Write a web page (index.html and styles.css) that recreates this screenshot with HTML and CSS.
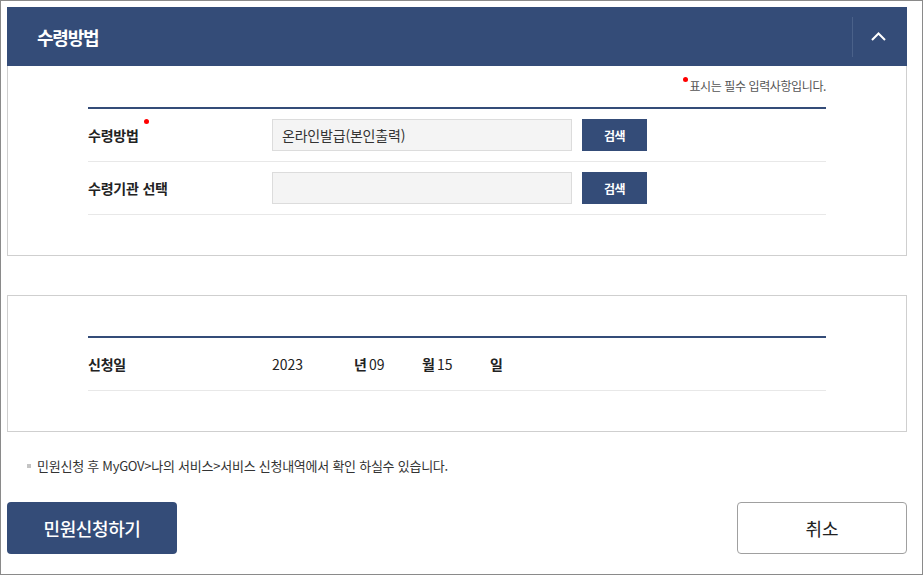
FILE: index.html
```html
<!DOCTYPE html>
<html lang="ko">
<head>
<meta charset="utf-8">
<title>수령방법</title>
<link rel="stylesheet" href="styles.css">
</head>
<body>
<div class="frame">
  <div class="sec-head">
    <h2 class="sec-title">수령방법</h2>
    <div class="toggle">
      <svg width="15" height="9" viewBox="0 0 15 9"><polyline points="1,8 7.5,1.5 14,8" fill="none" stroke="#fff" stroke-width="2"/></svg>
    </div>
  </div>
  <div class="panel panel-first">
    <p class="req-note"><span class="dot"></span>표시는 필수 입력사항입니다.</p>
    <div class="tbl">
      <div class="row">
        <div class="label">수령방법<span class="dot dot-label"></span></div>
        <div class="value">
          <div class="inp">온라인발급(본인출력)</div>
          <button class="btn-search">검색</button>
        </div>
      </div>
      <div class="row">
        <div class="label">수령기관 선택</div>
        <div class="value">
          <div class="inp"></div>
          <button class="btn-search">검색</button>
        </div>
      </div>
    </div>
  </div>
  <div class="panel panel-second">
    <div class="tbl">
      <div class="row">
        <div class="label">신청일</div>
        <div class="value date">
          <span class="d-year">2023</span>
          <span class="d-part"><b>년</b><span class="num">09</span></span>
          <span class="d-part"><b>월</b><span class="num">15</span></span>
          <span class="d-day"><b>일</b></span>
        </div>
      </div>
    </div>
  </div>
  <p class="info"><span class="sq"></span>민원신청 후 MyGOV&gt;나의 서비스&gt;서비스 신청내역에서 확인 하실수 있습니다.</p>
  <div class="actions">
    <button class="btn-primary">민원신청하기</button>
    <button class="btn-cancel">취소</button>
  </div>
</div>
</body>
</html>
```
FILE: styles.css
```css
* { box-sizing: border-box; }
html, body { margin: 0; padding: 0; background: #fff; }
body { font-family: "Noto Sans CJK KR", "Noto Sans", sans-serif; color: #222; }
.frame {
  width: 923px;
  height: 575px;
  border: 1px solid #8a8a8a;
  padding: 6px 15px 0 6px;
}
.sec-head {
  height: 59px;
  background: #344c78;
  display: flex;
  align-items: center;
  justify-content: space-between;
}
.sec-title {
  margin: 0 0 0 30px;
  color: #fff;
  font-size: 18px;
  font-weight: 700;
  letter-spacing: -1.2px;
  line-height: 20px;
}
.toggle {
  height: 40px;
  width: 55px;
  border-left: 1px solid #4a6189;
  display: flex;
  align-items: center;
  justify-content: center;
  padding-right: 4px;
}
.panel {
  border: 1px solid #cfcfcf;
  padding: 0 80px 40px 80px;
}
.panel-first { border-top: 0; padding-top: 10px; }
.panel-second { margin-top: 39px; padding-top: 40px; }
.req-note {
  margin: 0 0 11px;
  text-align: right;
  font-size: 12px;
  line-height: 20px;
  color: #555;
  letter-spacing: -0.4px;
}
.dot {
  display: inline-block;
  width: 5px;
  height: 5px;
  border-radius: 50%;
  background: #f00;
  vertical-align: top;
  margin-top: 1px;
  margin-right: 1px;
}
.dot-label { margin-left: 5px; margin-top: -6px; }
.tbl { border-top: 2px solid #344c78; }
.row {
  display: flex;
  align-items: center;
  height: 53px;
  border-bottom: 1px solid #e8e8e8;
}
.label {
  width: 184px;
  font-size: 14px;
  font-weight: 700;
  letter-spacing: -0.2px;
  line-height: 20px;
  color: #222;
}
.value { display: flex; align-items: center; gap: 10px; }
.inp {
  width: 300px;
  height: 32px;
  background: #f4f4f4;
  border: 1px solid #dcdcdc;
  padding: 0 9px;
  font-size: 14px;
  line-height: 30px;
  letter-spacing: -0.2px;
  color: #333;
}
.btn-search {
  width: 65px;
  height: 32px;
  border: 0;
  background: #344c78;
  color: #fff;
  font-family: inherit;
  font-size: 12px;
  font-weight: 700;
  letter-spacing: -0.5px;
  padding: 0;
}
.date { gap: 0; font-size: 14px; line-height: 20px; color: #222; }
.d-year { width: 82px; }
.d-part { width: 68px; }
.d-part b, .d-day b { font-weight: 700; }
.num { margin-left: 2px; }
.info {
  margin: 24px 0 0 20px;
  font-size: 13px;
  line-height: 20px;
  color: #333;
  letter-spacing: -0.25px;
  display: flex;
  align-items: center;
}
.sq {
  width: 4px;
  height: 4px;
  background: #c4c4c4;
  margin-right: 6px;
}
.actions {
  margin-top: 26px;
  display: flex;
  justify-content: space-between;
}
.btn-primary, .btn-cancel {
  height: 52px;
  border-radius: 4px;
  font-family: inherit;
  font-size: 18px;
  letter-spacing: -0.4px;
  padding: 0;
}
.btn-primary {
  width: 170px;
  background: #344c78;
  border: 0;
  color: #fff;
  font-weight: 500;
}
.btn-cancel {
  width: 170px;
  background: #fff;
  border: 1px solid #a0a0a0;
  color: #222;
  font-weight: 400;
  letter-spacing: 0;
}
```
